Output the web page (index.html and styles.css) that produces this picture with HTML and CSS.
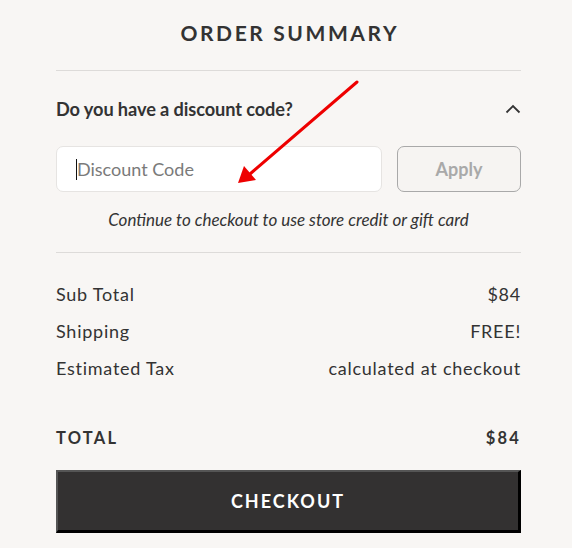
FILE: index.html
```html
<!DOCTYPE html>
<html>
<head>
<meta charset="utf-8">
<link rel="stylesheet" href="styles.css">
</head>
<body>
<div class="summary">
  <h1 class="title">ORDER SUMMARY</h1>
  <div class="discount">
    <div class="discount-head">
      <span class="discount-q">Do you have a discount code?</span>
      <svg class="chev" width="16" height="10" viewBox="0 0 16 10"><path d="M1.5 8.5 L8 2 L14.5 8.5" fill="none" stroke="#333" stroke-width="1.8"/></svg>
    </div>
    <div class="discount-form">
      <div class="input"><span class="caret"></span><span class="ph">Discount Code</span></div>
      <button class="apply">Apply</button>
    </div>
    <p class="note">Continue to checkout to use store credit or gift card</p>
  </div>
  <div class="lines">
    <div class="row"><span>Sub Total</span><span>$84</span></div>
    <div class="row"><span>Shipping</span><span>FREE!</span></div>
    <div class="row"><span>Estimated Tax</span><span>calculated at checkout</span></div>
  </div>
  <div class="total"><span>TOTAL</span><span>$84</span></div>
  <button class="checkout">CHECKOUT</button>
</div>
<svg class="arrow" width="572" height="548" viewBox="0 0 572 548">
  <line x1="357" y1="82" x2="250" y2="174" stroke="#e00" stroke-width="3" stroke-linecap="round"/>
  <polygon points="238,183 244,166 256,180" fill="#e00"/>
</svg>
</body>
</html>
```

FILE: styles.css
```css
html, body { margin: 0; padding: 0; }
body {
  background: #f8f6f4;
  font-family: Lato, "Open Sans", sans-serif;
  color: #333;
  width: 572px;
  height: 548px;
  overflow: hidden;
  position: relative;
}
.summary {
  margin-left: 56px;
  width: 465px;
}
.title {
  margin: 0;
  padding-top: 20px;
  padding-left: 2.6px;
  height: 71px;
  box-sizing: border-box;
  border-bottom: 1px solid #dddbd9;
  text-align: center;
  font-size: 21px;
  font-weight: 700;
  letter-spacing: 2.6px;
  line-height: 26px;
  color: #333;
}
.discount {
  border-bottom: 1px solid #dddbd9;
  padding-bottom: 22px;
}
.discount-head {
  display: flex;
  justify-content: space-between;
  align-items: center;
  height: 75px;
}
.discount-q {
  font-size: 18.2px;
  font-weight: 700;
  color: #333;
  letter-spacing: -0.1px;
}
.discount-form {
  display: flex;
  gap: 15px;
}
.input {
  flex: 0 0 326px;
  height: 46px;
  box-sizing: border-box;
  background: #fff;
  border: 1px solid #e6e4e2;
  border-radius: 7px;
  display: flex;
  align-items: center;
  padding-left: 19px;
}
.caret {
  width: 1px;
  height: 21px;
  background: #111;
}
.ph {
  font-size: 18px;
  color: #7a7a7a;
}
.apply {
  flex: 1;
  height: 46px;
  box-sizing: border-box;
  background: #f6f4f2;
  border: 1px solid #a9a9a9;
  border-radius: 7px;
  font-family: Lato, sans-serif;
  font-size: 18px;
  font-weight: 700;
  color: #a9a9a9;
  padding: 0;
}
.note {
  margin: 0;
  padding-top: 18px;
  text-align: center;
  font-style: italic;
  font-size: 17px;
  line-height: 20px;
  color: #333;
}
.lines {
  padding-top: 30px;
}
.row {
  display: flex;
  justify-content: space-between;
  font-size: 18px;
  letter-spacing: 0.75px;
  line-height: 22px;
  height: 37px;
}
.total {
  display: flex;
  justify-content: space-between;
  margin-top: 33px;
  font-size: 16.5px;
  font-weight: 700;
  letter-spacing: 2.2px;
  line-height: 22px;
}
.checkout {
  margin-top: 21px;
  width: 465px;
  height: 63px;
  box-sizing: border-box;
  background: #333131;
  border-style: solid;
  border-width: 2px 3px 3px 2px;
  border-color: #555 #000 #000 #555;
  color: #fff;
  font-family: Lato, sans-serif;
  font-size: 18px;
  font-weight: 700;
  letter-spacing: 2px;
  padding: 0;
}
.arrow {
  position: absolute;
  left: 0;
  top: 0;
  pointer-events: none;
}
```
